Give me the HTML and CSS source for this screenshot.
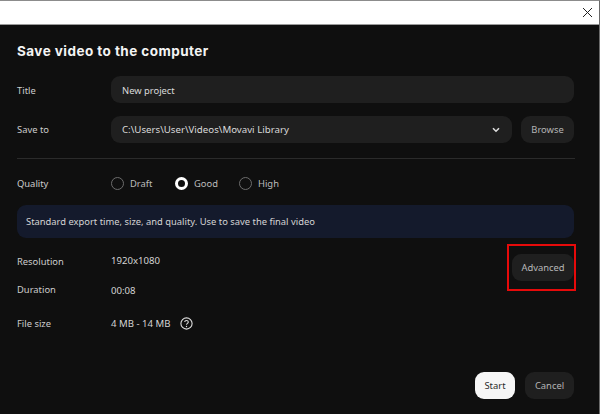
FILE: index.html
```html
<!DOCTYPE html>
<html lang="en">
<head>
<meta charset="utf-8">
<title>Save video to the computer</title>
<link rel="stylesheet" href="styles.css">
</head>
<body>
<div class="window">
  <header class="titlebar">
    <svg class="close" width="11" height="11" viewBox="0 0 11 11"><path d="M1 1l9 9M10 1l-9 9" stroke="#222" stroke-width="1" fill="none"/></svg>
  </header>
  <main class="dialog">
    <h1 class="heading">Save video to the computer</h1>
    <div class="row row-title">
      <span class="label">Title</span>
      <div class="field grow">New project</div>
    </div>
    <div class="row row-save">
      <span class="label">Save to</span>
      <div class="field grow select">
        <span class="path">C:\Users\User\Videos\Movavi Library</span>
        <svg class="chevron" width="8" height="6" viewBox="0 0 8 6"><path d="M1 1.2l3 3 3-3" stroke="#ddd" stroke-width="1.6" fill="none"/></svg>
      </div>
      <button class="btn browse">Browse</button>
    </div>
    <hr class="divider">
    <div class="row row-quality">
      <span class="label">Quality</span>
      <div class="radios">
        <span class="radio"><i class="dot"></i>Draft</span>
        <span class="radio on"><i class="dot"></i>Good</span>
        <span class="radio"><i class="dot"></i>High</span>
      </div>
    </div>
    <div class="info">Standard export time, size, and quality. Use to save the final video</div>
    <section class="details">
      <div class="specs">
        <span class="label">Resolution</span><span class="value value-res">1920x1080</span>
        <span class="label">Duration</span><span class="value value-dur">00:08</span>
        <span class="label">File size</span>
        <span class="value size">4 MB - 14 MB
          <svg class="help" width="13" height="13" viewBox="0 0 13 13"><circle cx="6.5" cy="6.5" r="5.6" stroke="#ddd" stroke-width="1.1" fill="none"/><path d="M4.7 5.1c0-1 .8-1.6 1.8-1.6s1.8.6 1.8 1.5c0 1.3-1.8 1.4-1.8 2.7" stroke="#ddd" stroke-width="1.1" fill="none"/><circle cx="6.5" cy="9.5" r=".7" fill="#ddd"/></svg>
        </span>
      </div>
      <div class="advanced-wrap">
        <button class="btn advanced">Advanced</button>
        <span class="highlight"></span>
      </div>
    </section>
    <footer class="actions">
      <button class="btn primary">Start</button>
      <button class="btn cancel">Cancel</button>
    </footer>
  </main>
</div>
</body>
</html>
```

FILE: styles.css
```css
* { box-sizing: border-box; }
html, body { margin: 0; padding: 0; }
body {
  width: 600px;
  height: 414px;
  overflow: hidden;
  background: #0f0f0f;
  font-family: "Noto Sans", "Open Sans", sans-serif;
  font-size: 9.4px;
  color: #d2d2d2;
}
.window {
  display: flex;
  flex-direction: column;
  height: 414px;
  border-top: 1px solid #8c8c8c;
  border-right: 1px solid #6a6a6a;
}
.titlebar {
  flex: none;
  height: 24px;
  background: #fff;
  border-bottom: 1px solid #9a9a9a;
  display: flex;
  justify-content: flex-end;
  align-items: center;
  padding-right: 6px;
}
.close { display: block; margin-top: -1px; }
.dialog {
  flex: 1;
  display: flex;
  flex-direction: column;
  padding: 0 25px 15px 17px;
  background: #0f0f0f;
}
.heading {
  margin: 17px 0 0;
  height: 18px;
  font-family: Inter, sans-serif;
  font-size: 13.5px;
  line-height: 18px;
  font-weight: 700;
  letter-spacing: 0.45px;
  color: #f4f4f4;
}
.row { display: flex; align-items: center; }
.row-title { margin-top: 16px; }
.row-title .label { padding-top: 2px; }
.row-title .field { padding-top: 2px; }
.row-save { margin-top: 13px; gap: 9px; }
.label { width: 94px; flex: none; color: #cccccc; }
.row-save .label { margin-right: -9px; }
.field {
  height: 27px;
  background: #1f1f1f;
  border-radius: 9px;
  padding: 0 11px;
  display: flex;
  align-items: center;
  color: #dadada;
}
.grow { flex: 1; }
.select { justify-content: space-between; padding-right: 12px; }
.path { font-size: 9.7px; }
.chevron { display: block; }
.btn {
  font: inherit;
  border: 0;
  height: 27px;
  border-radius: 9px;
  background: #1f1f1f;
  color: #b4b4b4;
  padding: 0;
}
.browse { width: 53px; flex: none; }
.divider {
  width: 558px;
  height: 1px;
  border: 0;
  background: #2b2b2b;
  margin: 15px 0 0;
}
.row-quality { margin-top: 17px; height: 14px; }
.radios { display: flex; }
.radio { display: flex; align-items: center; gap: 6px; width: 64px; color: #bcbcbc; }
.dot {
  width: 13px;
  height: 13px;
  border-radius: 50%;
  border: 1.5px solid #6c6c6c;
}
.on .dot { background: #0f0f0f; border: 3.5px solid #fff; }
.info {
  margin-top: 15px;
  width: 557px;
  height: 33px;
  padding: 0 9px;
  display: flex;
  align-items: center;
  background: #141a2c;
  border-radius: 9px;
  color: #d4d4d4;
}
.details {
  display: flex;
  justify-content: space-between;
  margin-top: 16px;
  width: 557px;
}
.specs {
  display: grid;
  grid-template-columns: 94px auto;
  grid-template-rows: 15px 15px 15px;
  row-gap: 13px;
  align-content: start;
  align-items: center;
}
.value-res { margin-bottom: 2px; }
.value-dur { margin-top: 2px; }
.specs > :nth-child(n+5) { margin-top: 12px; }
.value { font-size: 9.6px; color: #d4d4d4; display: flex; align-items: center; gap: 10px; }
.help { display: block; }
.advanced-wrap { position: relative; }
.advanced { width: 62px; color: #b8b8b8; }
.highlight {
  position: absolute;
  left: -5px;
  top: -10px;
  width: 69px;
  height: 47px;
  border: 2px solid #e60a0a;
}
.actions {
  margin-top: auto;
  display: flex;
  justify-content: flex-end;
  gap: 10px;
  width: 557px;
}
.primary { width: 40px; background: #f6f6f6; color: #2a2a2a; }
.cancel { width: 49px; color: #b4b4b4; }
```
